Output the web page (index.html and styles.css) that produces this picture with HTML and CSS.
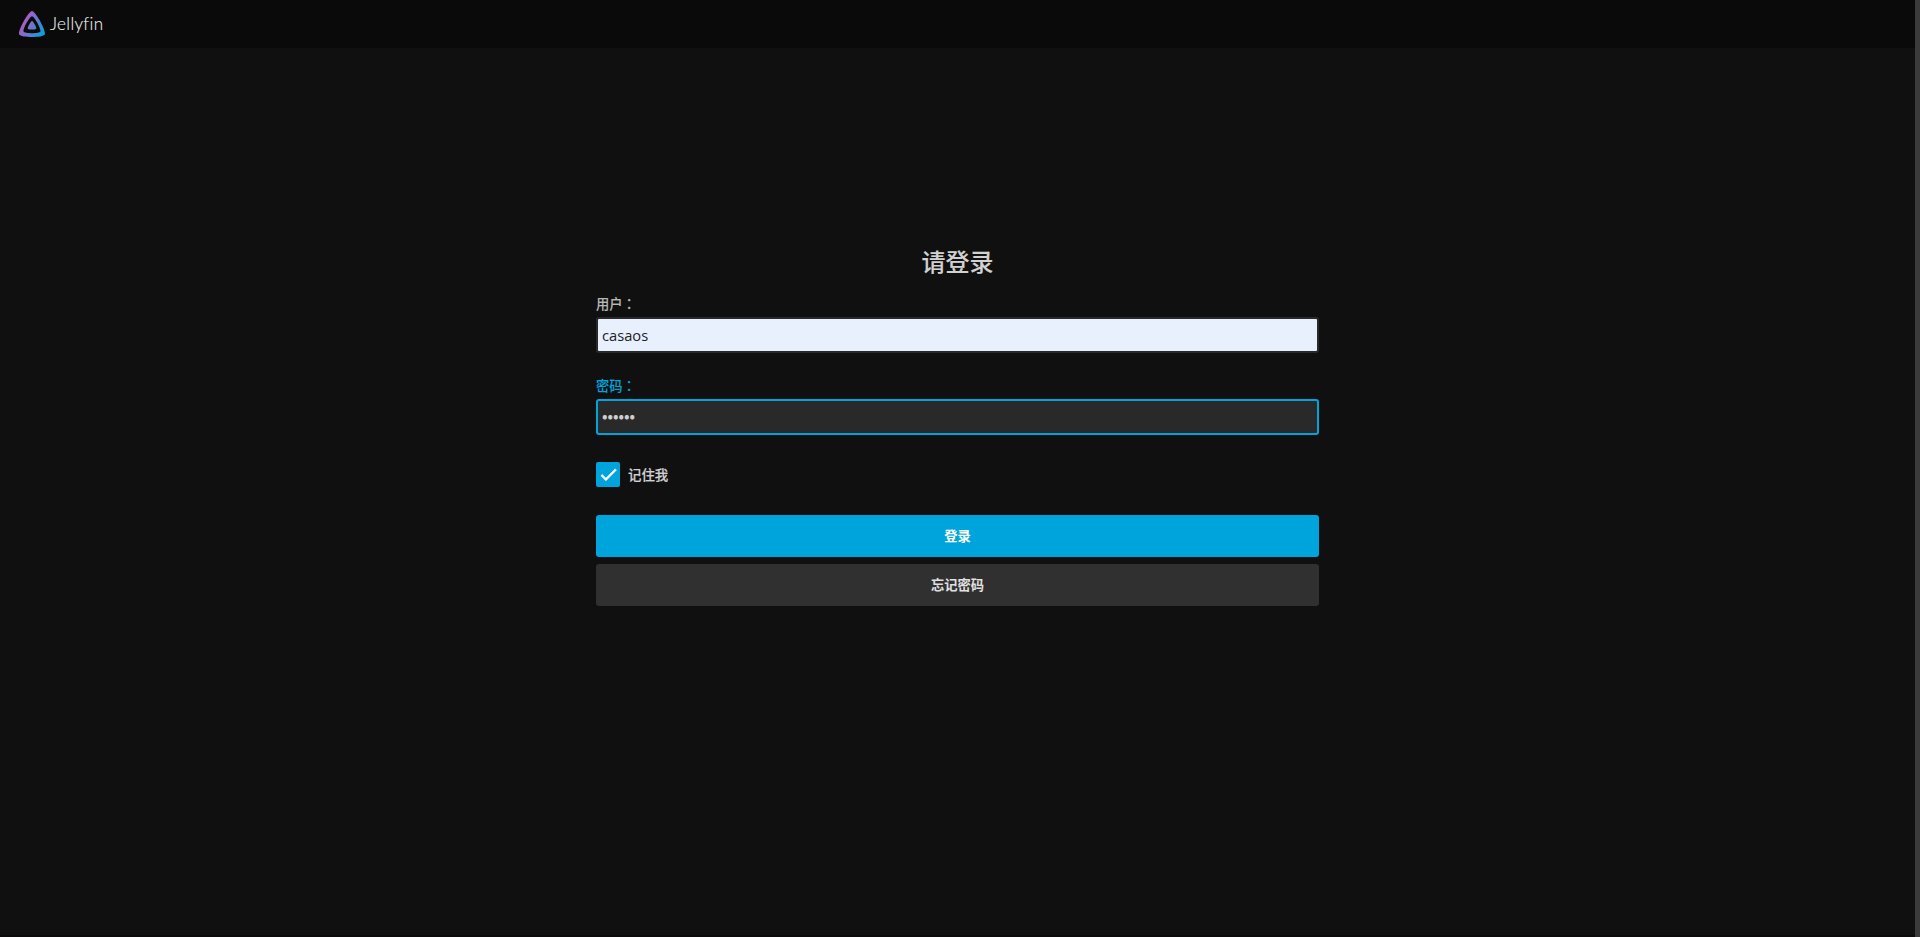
FILE: index.html
```html
<!DOCTYPE html>
<html lang="zh-CN">
<head>
<meta charset="utf-8">
<title>Jellyfin</title>
<link rel="stylesheet" href="styles.css">
</head>
<body>
<div class="page">
  <header class="header">
    <svg class="logo" viewBox="56 56 400 400" aria-hidden="true">
      <defs>
        <linearGradient id="brand" gradientUnits="userSpaceOnUse" x1="126.15" y1="219.32" x2="457.68" y2="410.73">
          <stop offset="0" stop-color="#aa5cc3"/>
          <stop offset="1" stop-color="#00a4dc"/>
        </linearGradient>
      </defs>
      <path fill="url(#brand)" d="M190.56 329.07c8.63 17.3 122.4 17.12 130.93 0 8.52-17.1-47.9-119.78-65.46-119.8-17.57 0-74.1 102.5-65.47 119.8z"/>
      <path fill="url(#brand)" d="M58.75 417.03c25.97 52.15 368.86 51.55 394.55 0S308.93 56.08 256.03 56.08c-52.92 0-223.25 308.8-197.28 360.95zm68.04-45.25c-17.02-34.17 94.6-236.5 129.26-236.5 34.67 0 146.1 202.7 129.26 236.5-16.83 33.8-241.5 34.17-258.52 0z"/>
    </svg>
    <span class="brand">Jellyfin</span>
  </header>
  <main class="main">
    <form class="form">
      <h1 class="title">请登录</h1>
      <label class="label" for="user">用户<span class="colon" lang="zh-TW">：</span></label>
      <input class="input input-filled" id="user" type="text" value="casaos">
      <label class="label label-focused" for="password">密码<span class="colon" lang="zh-TW">：</span></label>
      <input class="input input-focused" id="password" type="password" value="casaos">
      <div class="remember">
        <span class="checkbox">
          <svg class="check" viewBox="0 0 24 24" aria-hidden="true"><path fill="#fff" stroke="#fff" stroke-width="0.8" d="M9 16.17 4.83 12l-1.42 1.41L9 19 21 7l-1.41-1.41z"/></svg>
        </span>
        <span class="remember-text">记住我</span>
      </div>
      <button class="button button-submit" type="button">登录</button>
      <button class="button" type="button">忘记密码</button>
    </form>
  </main>
</div>
<div class="scrollbar"></div>
</body>
</html>
```
FILE: styles.css
```css
* { box-sizing: border-box; }

body {
  margin: 0;
  height: 937px;
  display: flex;
  overflow: hidden;
  background: #101010;
  color: #d1d1d1;
  font-family: "Noto Sans", "Noto Sans CJK SC", sans-serif;
}

.page { flex: 1; border-bottom: 2px solid #0c0a0b; }
.scrollbar { width: 5px; background: #3b3b3b; }

.header {
  height: 48px;
  padding-left: 19px;
  display: flex;
  align-items: center;
  background: #0a0a0a;
}
.logo { width: 26px; height: 26px; }
.brand {
  margin-left: 5px;
  font: 300 17px/26px Lato, sans-serif;
  letter-spacing: 0.35px;
  color: #f0f0f0;
  -webkit-text-stroke: 0.1px #f0f0f0;
}

.main { padding: 194px 0 0 596px; }
.form { width: 723px; display: flex; flex-direction: column; }

.title {
  margin: 0 0 16px;
  font-size: 24px;
  font-weight: 500;
  line-height: 40px;
  text-align: center;
  -webkit-text-stroke: 0.1px #d1d1d1;
}

.label {
  height: 19px;
  font-size: 13.3px;
  font-weight: 500;
  line-height: 11px;
  color: #b8b8b8;
  -webkit-text-stroke: 0.1px currentColor;
}
.label-focused { color: #00a4dc; }
.colon { font-family: "Noto Sans CJK TC", sans-serif; }

.input {
  width: 100%;
  height: 36px;
  margin: 0 0 27px;
  padding: 0 4px;
  border: 2px solid #292929;
  border-radius: 3px;
  outline: none;
  background: #292929;
  color: #d1d1d1;
  font: 14.7px "Noto Sans", sans-serif;
}
.input-filled { background: #e8f0fe; color: #222; font-family: "Open Sans", sans-serif; }
.input-focused { border-color: #00a4dc; -webkit-text-stroke: 0.8px #d1d1d1; }

.remember { height: 25px; display: flex; align-items: center; margin-bottom: 28px; }
.checkbox {
  width: 24px;
  height: 25px;
  display: flex;
  align-items: center;
  justify-content: center;
  border-radius: 2px;
  background: #00a4dc;
}
.check { width: 21px; height: 21px; }
.remember-text {
  margin-left: 8px;
  font-size: 13.4px;
  font-weight: 500;
  line-height: 20px;
  -webkit-text-stroke: 0.2px currentColor;
}

.button {
  height: 42px;
  margin: 0 0 7px;
  padding: 0 0 2px;
  border: 0;
  border-radius: 3px;
  background: #303030;
  color: #e0e0e0;
  font: 700 13.3px "Noto Sans", "Noto Sans CJK SC", sans-serif;
}
.button-submit { background: #00a4dc; color: #fff; }
```
